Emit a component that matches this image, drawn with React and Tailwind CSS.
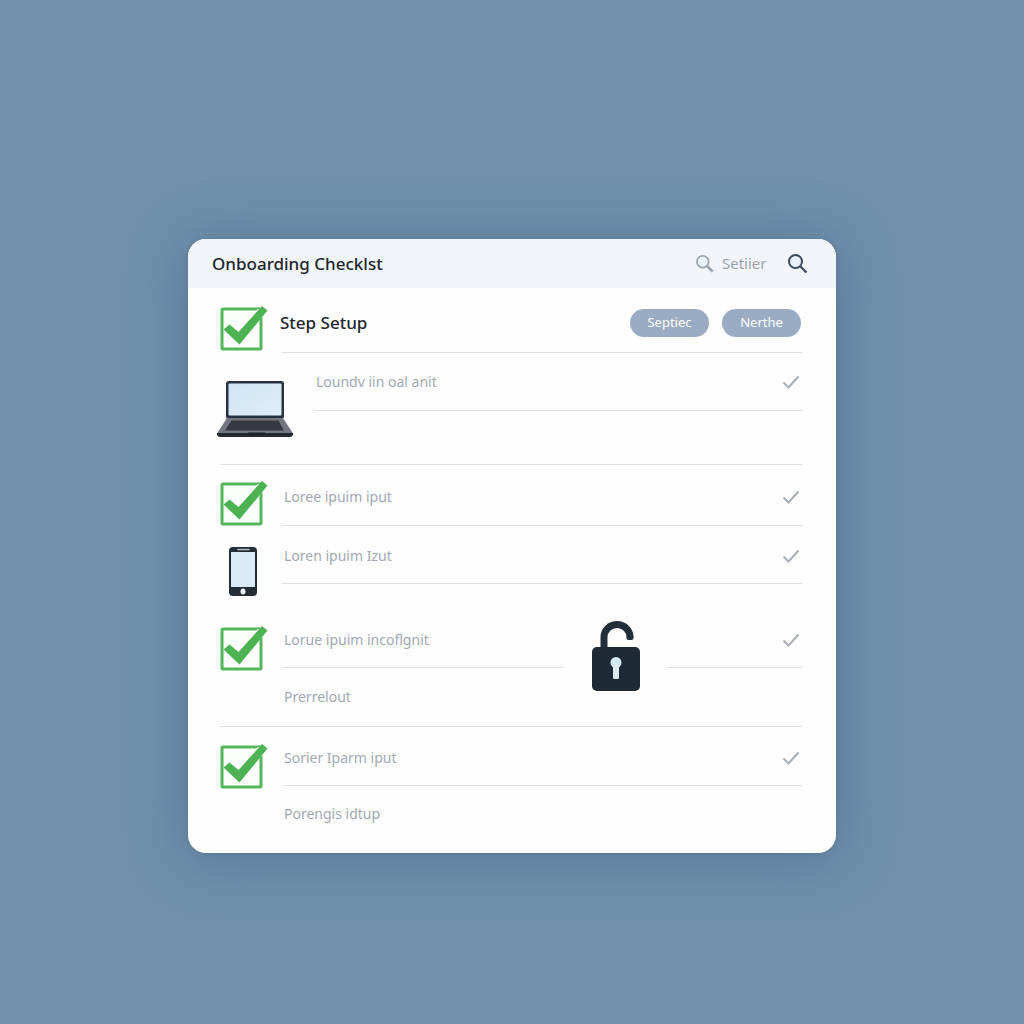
import React from "react";

function TickedBox({ id, title }) {
  return (
    <span className="relative block h-[46px] w-12 shrink-0">
      <input id={id} type="checkbox" defaultChecked aria-label={title} className="peer absolute inset-0 size-full cursor-pointer opacity-0" />
      <svg viewBox="0 0 48 46" className="pointer-events-none block h-[46px] w-12" aria-hidden="true">
        <rect x="2" y="4" width="39" height="40" rx="1" fill="#fbfffb" stroke="#55b65a" strokeWidth="3" />
        <path d="M37 5 43 12" stroke="#ffffff" strokeWidth="4" />
        <path d="M3.500 24.500 9.500 19.500 18.500 27 42 1 47.500 5.500 19.500 39.500Z" fill="#4db352" />
      </svg>
    </span>
  );
}

function RowCheck() {
  return (
    <svg viewBox="0 0 18 16" className="mr-0.5 h-4 w-[18px] shrink-0" fill="none" stroke="#a9afb6" strokeWidth="2" aria-hidden="true">
      <path d="M1.500 8.500 6.500 13.500 16.500 2.500" />
    </svg>
  );
}

function Laptop() {
  return (
    <svg viewBox="0 0 76 58" className="-ml-[3px] block h-[58px] w-[76px]" aria-hidden="true">
      <defs>
        <linearGradient id="screen" x1="0" y1="0" x2="1" y2="1">
          <stop offset="0" stopColor="#cfe4f4" />
          <stop offset="1" stopColor="#deeefa" />
        </linearGradient>
      </defs>
      <rect x="9" y="1" width="58" height="38" rx="3" fill="#27313f" />
      <rect x="11.500" y="3.500" width="53" height="32" rx="1" fill="url(#screen)" />
      <path d="M10 38H66L76 53.500H0Z" fill="#73757f" />
      <path d="M14.500 40.500H61.500L67 50.500H8Z" fill="#343943" />
      <path d="M0 53H76V55Q75 57 73 57H3Q1 57 0 55Z" fill="#252932" />
      <path d="M31 52.500H48L46.500 55H32.500Z" fill="#1c212a" />
    </svg>
  );
}

function Phone() {
  return (
    <svg viewBox="0 0 30 50" className="ml-2 block h-[50px] w-[30px] shrink-0" aria-hidden="true">
      <rect x="1" y="1" width="28" height="49" rx="4" fill="#222d38" />
      <rect x="3" y="6" width="24" height="35" fill="#d9ebf9" />
      <path d="M10 3.500H21" stroke="#b7c0c7" strokeWidth="1.500" strokeLinecap="round" />
      <ellipse cx="15" cy="45.500" rx="2.500" ry="3" fill="#f2f7fa" />
    </svg>
  );
}

function OpenLock() {
  return (
    <svg viewBox="0 0 50 72" className="block h-[72px] w-[50px]" aria-hidden="true">
      <path d="M13 30V17A13 12.500 0 0 1 39 17V17.500" fill="none" stroke="#222e39" strokeWidth="7" />
      <path d="M35.500 16.500H42.500V18Q42.500 20 40.500 20H37.500Q35.500 20 35.500 18Z" fill="#222e39" />
      <rect x="1" y="27" width="48" height="44" rx="5" fill="#1d2935" />
      <circle cx="25" cy="42.500" r="5.500" fill="#d5ebf2" />
      <path d="M22 45H28V57.500Q28 59 26.500 59H23.500Q22 59 22 57.500Z" fill="#dcebf1" />
    </svg>
  );
}

function Magnifier({ className, bold }) {
  return (
    <svg viewBox="0 0 20 20" className={className} fill="none" stroke="currentColor" strokeWidth="2" aria-hidden="true">
      <circle cx="7.500" cy="7.500" r="6.500" fill="#e9f1fa" />
      <path d="M12 12 18.500 18.500" strokeWidth={bold ? 3 : 2.200} />
    </svg>
  );
}

function Item({ id, text, icon, height, checked, line = true, pad = "", iconPad = "", children }) {
  return (
    <li className={`relative flex ${height}`}>
      <div className={`flex w-[62px] shrink-0 items-start ${iconPad}`}>{icon}</div>
      <div className={`flex min-w-0 grow items-center justify-between ${pad} ${line ? "border-b border-[#dfe1e4]" : ""}`}>
        <label htmlFor={id} className="pl-0.5 text-sm text-[#a3a9b3]">{text}</label>
        {checked && <RowCheck />}
      </div>
      {children}
    </li>
  );
}

export default function App() {
  return (
    <main className="flex min-h-screen items-center justify-center bg-[#7090ab] px-4 pt-[68px] font-['Noto_Sans',sans-serif]">
      <section className="w-full max-w-[648px] overflow-hidden rounded-[18px] bg-[#fefefe] shadow-[0_4px_56px_4px_rgba(62,98,132,0.45),0_1px_4px_rgba(60,90,120,0.3)]">
        <header className="flex h-[49px] items-center justify-between bg-[#f1f5fa] pr-7 pl-6">
          <h1 className="text-[17px] leading-6 font-medium text-[#1f252c]">Onboarding Checklst</h1>
          <div className="flex items-center">
            <label htmlFor="search" aria-label="Search" className="text-[#9ca5af]">
              <Magnifier className="size-[18px]" bold />
            </label>
            <input id="search" defaultValue="Setiier" className="ml-2 w-[66px] bg-transparent text-[15px] text-[#9aa2ac] outline-none" />
            <button type="button" aria-label="Search" className="text-[#3b4958]">
              <Magnifier className="size-5" />
            </button>
          </div>
        </header>

        <div className="pr-[34px] pl-8">
          <div className="flex h-[65px]">
            <div className="flex w-[62px] shrink-0 items-start pt-[17px]">
              <TickedBox id="setup" title="Step Setup" />
            </div>
            <div className="flex grow items-center justify-between border-b border-[#dfe1e4] pt-1.5">
              <h2 className="-ml-0.5 text-[17px] leading-6 font-medium text-[#22272e]">Step Setup</h2>
              <div className="flex gap-[13px] pr-px">
                <button type="button" className="h-7 w-[79px] rounded-full bg-[#9aacc3] text-[13px] text-white">Septiec</button>
                <button type="button" className="h-7 w-[79px] rounded-full bg-[#9aacc3] text-[13px] text-white">Nerthe</button>
              </div>
            </div>
          </div>

          <div className="flex h-28 border-b border-[#dfe1e4]">
            <div className="flex w-[94px] shrink-0 items-center">
              <Laptop />
            </div>
            <div className="grow">
              <div className="flex h-[58px] items-center justify-between border-b border-[#dfe1e4]">
                <p className="pl-0.5 text-sm text-[#a3a9b3]">Loundv iin oal anit</p>
                <RowCheck />
              </div>
            </div>
          </div>

          <ul className="border-b border-[#dfe1e4]">
            <Item id="a" text="Loree ipuim iput" height="h-[61px]" pad="pt-1" iconPad="pt-[15px]" checked icon={<TickedBox id="a" title="Loree ipuim iput" />} />
            <Item text="Loren ipuim Izut" height="h-[58px]" pad="pt-0.5" iconPad="pt-5" checked icon={<Phone />} />
            <Item id="b" text="Lorue ipuim incoflgnit" height="h-[84px]" pad="pt-7" iconPad="pt-[41px]" checked icon={<TickedBox id="b" title="Lorue ipuim incoflgnit" />}>
              <div className="absolute -bottom-8 right-[135px] flex h-[88px] w-[103px] items-center justify-center bg-[#fefefe]">
                <OpenLock />
              </div>
            </Item>
            <Item text="Prerrelout" height="h-[58px]" line={false} />
          </ul>

          <ul>
            <Item id="c" text="Sorier Iparm iput" height="h-[59px]" pad="pt-1" iconPad="pt-4" checked icon={<TickedBox id="c" title="Sorier Iparm iput" />} />
            <Item text="Porengis idtup" height="h-[67px]" line={false} pad="pb-3" />
          </ul>
        </div>
      </section>
    </main>
  );
}
